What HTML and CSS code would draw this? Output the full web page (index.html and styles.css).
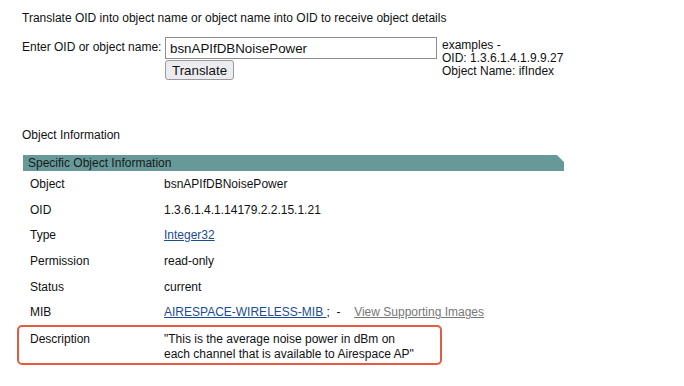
FILE: index.html
```html
<!DOCTYPE html>
<html>
<head>
<meta name="viewport" content="width=device-width, initial-scale=1">
<link rel="stylesheet" href="styles.css">
</head>
<body>

<div class="page">
    <p class="intro">Translate OID into object name or object name into OID to receive object details</p>

    <div class="lookup">
        <span class="lookupLabel">Enter OID or object name:</span>
        <div class="lookupField">
            <input type="text" class="oidInput" value="bsnAPIfDBNoisePower">
            <button class="translateBtn">Translate</button>
        </div>
        <div class="examples">
            examples -<br>
            OID: 1.3.6.1.4.1.9.9.27<br>
            Object Name: ifIndex
        </div>
    </div>

    <p class="sectionTitle">Object Information</p>

    <div class="objTable">
        <div class="objHeader">Specific Object Information</div>
        <div class="objRow"><span class="objKey">Object</span><span class="objVal">bsnAPIfDBNoisePower</span></div>
        <div class="objRow"><span class="objKey">OID</span><span class="objVal">1.3.6.1.4.1.14179.2.2.15.1.21</span></div>
        <div class="objRow"><span class="objKey">Type</span><span class="objVal"><a href="#">Integer32</a></span></div>
        <div class="objRow"><span class="objKey">Permission</span><span class="objVal">read-only</span></div>
        <div class="objRow"><span class="objKey">Status</span><span class="objVal">current</span></div>
        <div class="objRow"><span class="objKey">MIB</span><span class="objVal"><a href="#">AIRESPACE-WIRELESS-MIB </a>;&nbsp; -&nbsp; <a href="#" class="greyLink">View Supporting Images</a></span></div>
        <div class="objRow descRow"><span class="objKey">Description</span><span class="objVal">"This is the average noise power in dBm on<br>each channel that is available to Airespace AP"</span></div>
    </div>
</div>

</body>
</html>
```

FILE: styles.css
```css
/* Base page */
body {
    margin: 0;
    font-family: "Liberation Sans", Arial, sans-serif;
    font-size: 12px;
    color: #111;
    background: #fff;
}

* {
    box-sizing: border-box;
}

.page {
    padding: 11px 0 0 22px;
}

p {
    margin: 0;
}

.intro {
    line-height: 14px;
}

/* Lookup form */
.lookup {
    display: flex;
    align-items: flex-start;
    margin-top: 12px;
}

.lookupLabel {
    width: 143px;
    padding-top: 3px;
    line-height: 14px;
}

.lookupField {
    display: flex;
    flex-direction: column;
    align-items: flex-start;
}

.oidInput {
    width: 272px;
    height: 22px;
    margin: 0;
    padding: 1px 4px;
    border: 1px solid #8f8f8f;
    font-family: "Liberation Sans", Arial, sans-serif;
    font-size: 13.33px;
    color: #111;
}

.translateBtn {
    margin-top: 1px;
    height: 20px;
    padding: 0 6px;
    border: 1px solid #9a9a9a;
    border-radius: 3px;
    background: #ececf0;
    font-family: "Liberation Sans", Arial, sans-serif;
    font-size: 13.33px;
    color: #111;
}

.examples {
    margin-left: 5px;
    margin-top: 2px;
    line-height: 13px;
}

.sectionTitle {
    margin-top: 48px;
    line-height: 14px;
}

/* Object table */
.objTable {
    width: 541px;
    margin-top: 13px;
    margin-left: 1px;
}

.objHeader {
    height: 16px;
    padding-left: 5px;
    line-height: 16px;
    background: #689999;
    color: #141c1c;
    clip-path: polygon(0 0, 534px 0, 541px 7px, 541px 100%, 0 100%);
}

.objRow {
    display: flex;
    height: 25.7px;
    align-items: center;
    padding-left: 7px;
}

.objKey {
    width: 134px;
}

.objVal a {
    color: #1d4c91;
}

.objVal .greyLink {
    margin-left: 7px;
    color: #777;
}

/* Highlighted description row */
.descRow {
    height: 40px;
    width: 425px;
    margin-left: -6px;
    padding: 5px 0 0 11px;
    align-items: flex-start;
    line-height: 15px;
    border: 2px solid #e65b40;
    border-radius: 5px;
}

.descRow .objKey {
    width: 134px;
}
```
